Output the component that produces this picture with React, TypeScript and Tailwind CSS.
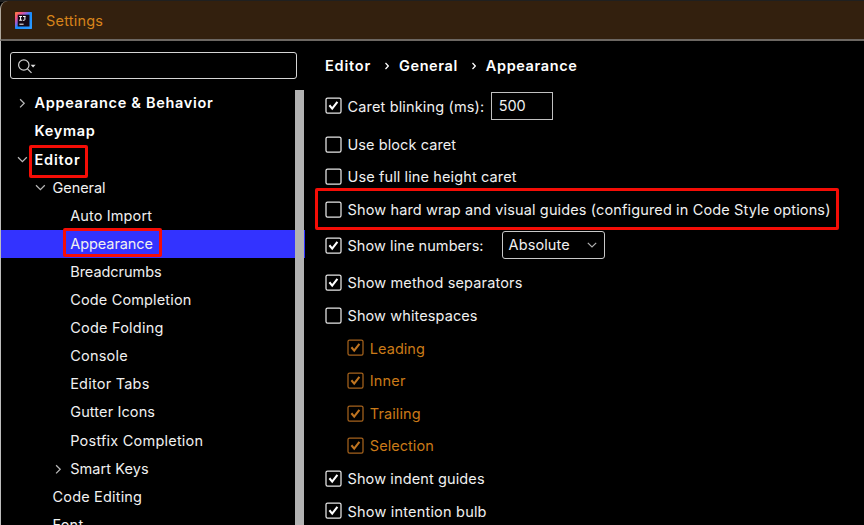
import React from "react";

type TreeItem = {
  label: string;
  pad: string;
  arrow?: "right" | "down";
  bold?: boolean;
  selected?: boolean;
  marker?: string;
  tracking?: string;
};

const tree: TreeItem[] = [
  { label: "Appearance & Behavior", pad: "pl-[33.5px]", arrow: "right", bold: true },
  { label: "Keymap", pad: "pl-[33.5px]", bold: true },
  { label: "Editor", pad: "pl-[33.5px]", arrow: "down", bold: true, marker: "-left-[6px] -top-[3px] h-[33px] w-[59px]", tracking: "tracking-[0.8px]" },
  { label: "General", pad: "pl-[51.5px]", arrow: "down", tracking: "tracking-[-0.05px]" },
  { label: "Auto Import", pad: "pl-[69.2px]", tracking: "tracking-[0.12px]" },
  { label: "Appearance", pad: "pl-[69.2px]", selected: true, tracking: "tracking-[-0.06px]", marker: "-left-[7px] -top-[4px] h-[29px] w-[99px]" },
  { label: "Breadcrumbs", pad: "pl-[69.2px]", tracking: "tracking-[-0.03px]" },
  { label: "Code Completion", pad: "pl-[69.2px]", tracking: "tracking-[0.15px]" },
  { label: "Code Folding", pad: "pl-[69.2px]", tracking: "tracking-[0.22px]" },
  { label: "Console", pad: "pl-[69.2px]" },
  { label: "Editor Tabs", pad: "pl-[69.2px]" },
  { label: "Gutter Icons", pad: "pl-[69.2px]", tracking: "tracking-[0.12px]" },
  { label: "Postfix Completion", pad: "pl-[69.2px]" },
  { label: "Smart Keys", pad: "pl-[69.2px]", arrow: "right", tracking: "tracking-[0.08px]" },
  { label: "Code Editing", pad: "pl-[51.5px]", tracking: "tracking-[0.18px]" },
  { label: "Font", pad: "pl-[51.5px]" },
];

function Arrow({ dir }: { dir: "right" | "down" }) {
  return (
    <svg
      className="absolute top-1/2 -left-[18.5px] size-[12px] -translate-y-1/2"
      viewBox="0 0 12 12"
      fill="none"
      stroke="#b8b8b8"
      strokeWidth="1.25"
    >
      <path d={dir === "right" ? "M4.1 2.2 8.2 6.3 4.1 10.4" : "M2 3.2 6.4 7.6 10.8 3.2"} />
    </svg>
  );
}

function TreeRow({ item }: { item: TreeItem }) {
  return (
    <div className={`flex h-[28.12px] shrink-0 items-center ${item.pad} ${item.selected ? "bg-[#3333ff]" : ""}`}>
      <div
        className={`relative leading-[24px] whitespace-nowrap ${item.bold ? "font-semibold text-white" : ""} ${
          item.tracking ?? (item.bold ? "tracking-[0.69px]" : "tracking-[0.22px]")
        }`}
      >
        {item.arrow && <Arrow dir={item.arrow} />}
        {item.label}
        {item.marker && <span className={`absolute z-10 rounded-[2px] border-[3px] border-[#f50d06] ${item.marker}`} />}
      </div>
    </div>
  );
}

function Check({ on, muted }: { on?: boolean; muted?: boolean }) {
  return (
    <svg className="h-[17px] w-[17px] shrink-0" viewBox="0 0 17 17" fill="none">
      <rect x="1" y="1" width="15" height="15" rx="1.6" strokeWidth="1.25" stroke={muted ? "#a5621c" : "#e8e8e8"} />
      {on && <path d="M4.4 8.3 7.2 11.6 12.4 4.8" strokeWidth="2.1" stroke={muted ? "#bf7420" : "#fff"} />}
    </svg>
  );
}

function Option({
  label,
  on,
  muted,
  className = "",
  tracking = "tracking-[0.15px]",
  children,
}: {
  label: string;
  on?: boolean;
  muted?: boolean;
  className?: string;
  tracking?: string;
  children?: React.ReactNode;
}) {
  return (
    <div className={`relative flex h-[32.6px] shrink-0 items-center ${muted ? "ml-[22.3px] text-[#ca7a18]" : ""} ${className}`}>
      <Check on={on} muted={muted} />
      <span className={`relative top-[0.6px] ml-[5.5px] whitespace-nowrap ${tracking}`}>{label}</span>
      {children}
    </div>
  );
}

function Crumb() {
  return (
    <svg className="mr-[10px] ml-[14px] h-[8px] w-[4px]" viewBox="0 0 4 8" fill="none" stroke="#fff" strokeWidth="1.2">
      <path d="M.5 1 3.3 4 .5 7" />
    </svg>
  );
}

export default function App() {
  return (
    <div className="flex h-[525px] w-[864px] flex-col overflow-hidden bg-black font-['Inter',sans-serif] text-[14.5px] text-[#f0f0f0]">
      <div className="flex h-[2px] shrink-0 bg-[#202020]" />
      <div className="-mt-[1px] flex h-[40px] shrink-0 items-center rounded-tl-[8px] border-b-2 border-l border-b-[#6c6762] border-l-[#b0a89c] bg-[#33200e] pl-[14px]">
        <svg className="size-[17px]" viewBox="0 0 17 17">
          <defs>
            <linearGradient id="logo" x1="0" y1="0" x2="1" y2="1">
              <stop offset="0" stopColor="#ff8a38" />
              <stop offset="0.2" stopColor="#f4507e" />
              <stop offset="0.38" stopColor="#8a62e0" />
              <stop offset="0.5" stopColor="#168dff" />
              <stop offset="1" stopColor="#2f9bff" />
            </linearGradient>
          </defs>
          <rect width="17" height="17" rx="0.7" fill="url(#logo)" />
          <rect x="2.7" y="2.7" width="11.8" height="11.8" fill="#150815" />
          <path d="M4.2 4.5h2.8M5.6 4.5v3.7M4.2 8.2h2.8M8 4.5h2.6M9.9 4.5v2.9q0 .9-1 .9h-1.1" stroke="#fff" strokeWidth="1" fill="none" />
          <path d="M4.4 12.2h4.2" stroke="#fff" strokeWidth="1" />
        </svg>
        <span className="relative top-[0.6px] ml-[14px] tracking-[0.2px] text-[#d8841b]">Settings</span>
      </div>

      <div className="flex min-h-0 flex-1 border-l border-[#bdbdbd]">
        <aside className="flex w-[304px] shrink-0 flex-col">
          <div className="mt-[11px] ml-[9px] flex h-[27px] w-[287px] shrink-0 items-center rounded-[3px] border border-[#d5d5d5] pl-[6px]">
            <svg className="h-[16px] w-[20px]" viewBox="0 0 20 16" fill="none" stroke="#d0d0d0" strokeWidth="1.2">
              <circle cx="6.8" cy="7" r="5.2" />
              <path d="m10.5 10.8 4 4" />
              <path d="M13.6 6.8h5L16.1 9.4Z" fill="#e0e0e0" stroke="none" />
            </svg>
          </div>
          <div className="relative mt-[10.24px] flex min-h-0 flex-1 flex-col overflow-hidden">
            {tree.map((item) => (
              <TreeRow key={item.label} item={item} />
            ))}
            <div className="absolute top-[1px] bottom-0 left-[294px] w-[9px] bg-[#b2b2b2]" />
          </div>
        </aside>

        <main className="flex min-w-0 flex-1 flex-col pl-[20px]">
          <div className="mt-[12px] flex h-[26px] shrink-0 items-center font-semibold tracking-[0.69px] text-white">
            <span className="tracking-[0.8px]">Editor</span>
            <Crumb />
            <span className="tracking-[0.6px]">General</span>
            <Crumb />
            <span className="tracking-[0.6px]">Appearance</span>
          </div>
          <Option label="Caret blinking (ms):" on className="mt-[10.5px]">
            <div className="ml-[6.5px] flex h-[28px] w-[62px] items-center border border-[#c0c0c0] pl-[7px] tracking-[-0.1px]">500</div>
          </Option>
          <Option label="Use block caret" className="mt-[5.7px]" tracking="tracking-[0.08px]" />
          <Option label="Use full line height caret" tracking="tracking-[0.12px]" />
          <Option label="Show hard wrap and visual guides (configured in Code Style options)" tracking="tracking-[0.135px]">
            <span className="absolute -top-[5px] -left-[10px] h-[42px] w-[524px] rounded-[2px] border-[3px] border-[#f50d06]" />
          </Option>
          <Option label="Show line numbers:" on className="mt-[3.2px]" tracking="tracking-[0.07px]">
            <div className="ml-[18px] flex h-[28px] w-[103px] items-center justify-between rounded-[3px] border border-[#c8c8c8] pr-[7px] pl-[6px]">
              <span className="tracking-[0.1px]">Absolute</span>
              <svg className="h-[6px] w-[10px]" viewBox="0 0 10 6" fill="none" stroke="#b0b0b0" strokeWidth="1.2">
                <path d="M.8.8 5 5 9.2.8" />
              </svg>
            </div>
          </Option>
          <Option label="Show method separators" on className="mt-[5px]" />
          <Option label="Show whitespaces" tracking="tracking-[0.1px]" />
          <Option label="Leading" on muted tracking="tracking-[0.05px]" />
          <Option label="Inner" on muted />
          <Option label="Trailing" on muted tracking="tracking-[0.1px]" />
          <Option label="Selection" on muted tracking="tracking-[0.05px]" />
          <Option label="Show indent guides" on tracking="tracking-[0.12px]" />
          <Option label="Show intention bulb" on tracking="tracking-[0.2px]" />
        </main>
      </div>
    </div>
  );
}
